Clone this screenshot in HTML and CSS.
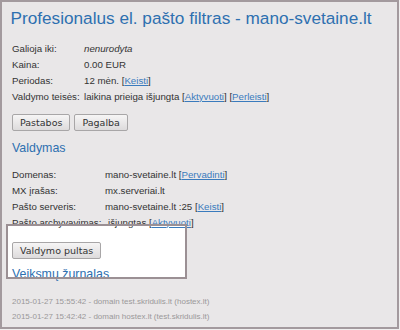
FILE: index.html
```html
<!DOCTYPE html>
<html>
<head>
<meta charset="utf-8">
<link rel="stylesheet" href="styles.css">
</head>
<body>
<div class="frame">
  <div class="hl-fill"></div>
  <div class="content">
    <h1 class="title">Profesionalus el. pašto filtras - mano-svetaine.lt</h1>
    <div class="info">
      <div class="row"><span class="lbl">Galioja iki:</span><span class="val"><em>nenurodyta</em></span></div>
      <div class="row"><span class="lbl">Kaina:</span><span class="val">0.00 EUR</span></div>
      <div class="row"><span class="lbl">Periodas:</span><span class="val">12 mėn. [<a href="#">Keisti</a>]</span></div>
      <div class="row"><span class="lbl">Valdymo teisės:</span><span class="val">laikina prieiga išjungta [<a href="#">Aktyvuoti</a>] [<a href="#">Perleisti</a>]</span></div>
    </div>
    <div class="buttons">
      <button class="btn">Pastabos</button>
      <button class="btn">Pagalba</button>
    </div>
    <h2 class="sub">Valdymas</h2>
    <div class="info info2">
      <div class="row"><span class="lbl">Domenas:</span><span class="val">mano-svetaine.lt [<a href="#">Pervadinti</a>]</span></div>
      <div class="row"><span class="lbl">MX įrašas:</span><span class="val">mx.serveriai.lt</span></div>
      <div class="row"><span class="lbl">Pašto serveris:</span><span class="val">mano-svetaine.lt :25 [<a href="#">Keisti</a>]</span></div>
      <div class="row"><span class="lbl">Pašto archyvavimas:</span><span class="val">išjungtas [<a href="#">Aktyvuoti</a>]</span></div>
    </div>
    <div class="buttons buttons2">
      <button class="btn">Valdymo pultas</button>
    </div>
    <h2 class="sub sub2">Veiksmų žurnalas</h2>
    <div class="log">
      <div class="log-row">2015-01-27 15:55:42 - domain test.skridulis.lt (hostex.lt)</div>
      <div class="log-row">2015-01-27 15:42:42 - domain hostex.lt (test.skridulis.lt)</div>
    </div>
  </div>
  <div class="hl-border"></div>
</div>
</body>
</html>
```
FILE: styles.css
```css
html, body {
  margin: 0;
  padding: 0;
  background: #efeeee;
}
.frame {
  position: relative;
  box-sizing: border-box;
  width: 399px;
  height: 329px;
  border: 2px solid #a39a9e;
  background: #e9e7e8;
  padding: 6px 10px 0 10px;
  font-family: "Liberation Sans", Arial, sans-serif;
  color: #333;
  overflow: hidden;
}
.content {
  position: relative;
  z-index: 1;
}
.hl-fill {
  position: absolute;
  z-index: 0;
  left: 4px;
  top: 222px;
  width: 181px;
  height: 55px;
  background: #ffffff;
}
.hl-border {
  position: absolute;
  z-index: 2;
  left: 4px;
  top: 222px;
  width: 177px;
  height: 51px;
  border: 2px solid #9b9094;
}
.title {
  margin: 0 0 0 -1.5px;
  font-weight: normal;
  font-size: 17.2px;
  line-height: 20px;
  color: #2e70b0;
  white-space: nowrap;
}
.info {
  margin-top: 12.6px;
  font-size: 9.7px;
}
.row {
  display: flex;
  height: 16px;
  line-height: 16px;
  white-space: nowrap;
}
.lbl {
  min-width: 72px;
}
.info2 .lbl {
  min-width: 93px;
}
.info2 .row:last-child .lbl {
  margin-right: 3px;
}
.val em {
  font-style: italic;
}
.val a {
  color: #3a7bbd;
  text-decoration: underline;
}
.buttons {
  display: flex;
  gap: 4px;
  margin-top: 9.4px;
}
.btn {
  font-family: "DejaVu Sans", sans-serif;
  font-size: 9.5px;
  color: #333;
  height: 17px;
  padding: 0 7px;
  border: 1px solid #a8a6a7;
  border-radius: 2px;
  background: linear-gradient(#f6f5f5, #dddbdc);
  line-height: 15px;
}
.sub {
  margin: 10px 0 0 0;
  font-weight: normal;
  font-size: 12.4px;
  line-height: 15px;
  color: #2e70b0;
}
.info2 {
  margin-top: 10.7px;
}
.buttons2 {
  margin-top: 11px;
}
.sub2 {
  margin-top: 8px;
}
.log {
  margin-top: 12px;
  font-size: 8px;
  color: #9a9899;
}
.log-row {
  height: 15px;
  line-height: 15px;
  white-space: nowrap;
}
```
